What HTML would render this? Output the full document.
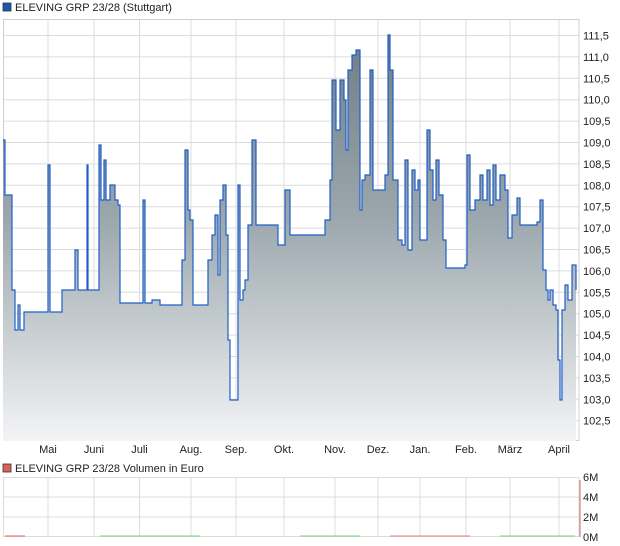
<!DOCTYPE html>
<html><head><meta charset="utf-8"><style>
html,body{margin:0;padding:0;background:#fff;width:620px;height:546px;overflow:hidden}
svg{display:block;font-family:"Liberation Sans",sans-serif}
</style></head><body>
<svg width="620" height="546" viewBox="0 0 620 546" xmlns="http://www.w3.org/2000/svg">
<defs>
<linearGradient id="g" x1="0" y1="0" x2="0" y2="1">
<stop offset="0" stop-color="#6f7d84"/>
<stop offset="0.45" stop-color="#9ba7ad"/>
<stop offset="1" stop-color="#f3f4f5"/>
</linearGradient>
</defs>
<rect x="3" y="3" width="8" height="8" fill="#1e56b4" stroke="#333" stroke-width="0.8"/>
<text x="15" y="11" font-size="11" fill="#222">ELEVING GRP 23/28 (Stuttgart)</text>

<g stroke="#dcdcdc" stroke-width="1">
<line x1="3" y1="19.5" x2="579" y2="19.5"/>
<line x1="3" y1="35.5" x2="579" y2="35.5"/><line x1="3" y1="56.9" x2="579" y2="56.9"/><line x1="3" y1="78.3" x2="579" y2="78.3"/><line x1="3" y1="99.7" x2="579" y2="99.7"/><line x1="3" y1="121.1" x2="579" y2="121.1"/><line x1="3" y1="142.5" x2="579" y2="142.5"/><line x1="3" y1="163.9" x2="579" y2="163.9"/><line x1="3" y1="185.3" x2="579" y2="185.3"/><line x1="3" y1="206.7" x2="579" y2="206.7"/><line x1="3" y1="228.1" x2="579" y2="228.1"/><line x1="3" y1="249.5" x2="579" y2="249.5"/><line x1="3" y1="270.9" x2="579" y2="270.9"/><line x1="3" y1="292.3" x2="579" y2="292.3"/><line x1="3" y1="313.7" x2="579" y2="313.7"/><line x1="3" y1="335.1" x2="579" y2="335.1"/><line x1="3" y1="356.5" x2="579" y2="356.5"/><line x1="3" y1="377.9" x2="579" y2="377.9"/><line x1="3" y1="399.3" x2="579" y2="399.3"/><line x1="3" y1="420.7" x2="579" y2="420.7"/>
<line x1="48" y1="19" x2="48" y2="441"/><line x1="94" y1="19" x2="94" y2="441"/><line x1="139.5" y1="19" x2="139.5" y2="441"/><line x1="191" y1="19" x2="191" y2="441"/><line x1="236" y1="19" x2="236" y2="441"/><line x1="284" y1="19" x2="284" y2="441"/><line x1="335" y1="19" x2="335" y2="441"/><line x1="378" y1="19" x2="378" y2="441"/><line x1="420" y1="19" x2="420" y2="441"/><line x1="466" y1="19" x2="466" y2="441"/><line x1="510" y1="19" x2="510" y2="441"/><line x1="559" y1="19" x2="559" y2="441"/>
</g>
<rect x="3.5" y="19.5" width="575.5" height="421" fill="none" stroke="#d0d0d0"/>

<polygon fill="url(#g)" points="3,441 3,140 5,140 5,195 10,195 12,195 12,290 15,290 15,330 18,330 18,305 20,305 20,330 24,330 24,312 45,312 48,312 48,165 50,165 50,312 58,312 62,312 62,290 70,290 75,290 75,250 78,250 78,290 85,290 87,290 87,165 88,165 88,290 96,290 99,290 99,145 101,145 101,200 104,200 104,160 106,160 106,200 110,200 110,185 115,185 115,200 118,200 118,205 120,205 120,303 140,303 143,303 143,200 145,200 145,303 150,303 152,303 152,300 160,300 160,305 180,305 182,305 182,260 185,260 185,150 188,150 188,210 190,210 190,220 193,220 193,305 205,305 208,305 208,260 212,260 212,235 215,235 215,215 218,215 218,275 220,275 220,200 223,200 223,185 226,185 226,235 228,235 228,340 230,340 230,400 235,400 238,400 238,185 240,185 240,300 243,300 243,290 245,290 245,280 248,280 248,225 252,225 252,140 256,140 256,225 275,225 278,225 278,245 285,245 285,190 290,190 290,235 320,235 325,235 325,220 330,220 330,180 332,180 332,80 336,80 336,130 340,130 340,80 344,80 344,100 346,100 346,150 348,150 348,70 352,70 352,55 356,55 356,50 360,50 360,210 362,210 362,180 365,180 365,175 370,175 370,70 373,70 373,190 380,190 385,190 385,175 388,175 388,35 390,35 390,70 393,70 393,180 395,180 398,180 398,240 402,240 402,245 405,245 405,160 408,160 408,250 412,250 412,170 415,170 415,190 418,190 418,180 420,180 420,240 425,240 427,240 427,130 430,130 430,170 433,170 433,200 436,200 436,160 439,160 439,195 443,195 443,240 446,240 446,268 455,268 465,268 465,265 467,265 467,155 470,155 470,210 475,210 475,200 480,200 480,175 483,175 483,200 487,200 487,170 490,170 490,205 493,205 493,165 496,165 496,200 500,200 500,175 505,175 505,190 508,190 508,238 512,238 512,215 517,215 517,198 520,198 520,225 530,225 537,225 537,222 540,222 540,200 543,200 543,270 546,270 546,290 548,290 548,300 550,300 550,290 553,290 553,305 556,305 556,310 558,310 558,360 560,360 560,400 562,400 562,310 565,310 565,285 568,285 568,300 572,300 572,265 575,265 576,265 576,290 576,441"/>
<polyline fill="none" stroke="#1e5fc8" stroke-width="1.2" points="3,140 5,140 5,195 10,195 12,195 12,290 15,290 15,330 18,330 18,305 20,305 20,330 24,330 24,312 45,312 48,312 48,165 50,165 50,312 58,312 62,312 62,290 70,290 75,290 75,250 78,250 78,290 85,290 87,290 87,165 88,165 88,290 96,290 99,290 99,145 101,145 101,200 104,200 104,160 106,160 106,200 110,200 110,185 115,185 115,200 118,200 118,205 120,205 120,303 140,303 143,303 143,200 145,200 145,303 150,303 152,303 152,300 160,300 160,305 180,305 182,305 182,260 185,260 185,150 188,150 188,210 190,210 190,220 193,220 193,305 205,305 208,305 208,260 212,260 212,235 215,235 215,215 218,215 218,275 220,275 220,200 223,200 223,185 226,185 226,235 228,235 228,340 230,340 230,400 235,400 238,400 238,185 240,185 240,300 243,300 243,290 245,290 245,280 248,280 248,225 252,225 252,140 256,140 256,225 275,225 278,225 278,245 285,245 285,190 290,190 290,235 320,235 325,235 325,220 330,220 330,180 332,180 332,80 336,80 336,130 340,130 340,80 344,80 344,100 346,100 346,150 348,150 348,70 352,70 352,55 356,55 356,50 360,50 360,210 362,210 362,180 365,180 365,175 370,175 370,70 373,70 373,190 380,190 385,190 385,175 388,175 388,35 390,35 390,70 393,70 393,180 395,180 398,180 398,240 402,240 402,245 405,245 405,160 408,160 408,250 412,250 412,170 415,170 415,190 418,190 418,180 420,180 420,240 425,240 427,240 427,130 430,130 430,170 433,170 433,200 436,200 436,160 439,160 439,195 443,195 443,240 446,240 446,268 455,268 465,268 465,265 467,265 467,155 470,155 470,210 475,210 475,200 480,200 480,175 483,175 483,200 487,200 487,170 490,170 490,205 493,205 493,165 496,165 496,200 500,200 500,175 505,175 505,190 508,190 508,238 512,238 512,215 517,215 517,198 520,198 520,225 530,225 537,225 537,222 540,222 540,200 543,200 543,270 546,270 546,290 548,290 548,300 550,300 550,290 553,290 553,305 556,305 556,310 558,310 558,360 560,360 560,400 562,400 562,310 565,310 565,285 568,285 568,300 572,300 572,265 575,265 576,265 576,290"/>

<g font-size="11" fill="#222">
<text x="583" y="39.5">111,5</text><text x="583" y="60.9">111,0</text><text x="583" y="82.3">110,5</text><text x="583" y="103.7">110,0</text><text x="583" y="125.1">109,5</text><text x="583" y="146.5">109,0</text><text x="583" y="167.9">108,5</text><text x="583" y="189.3">108,0</text><text x="583" y="210.7">107,5</text><text x="583" y="232.1">107,0</text><text x="583" y="253.5">106,5</text><text x="583" y="274.9">106,0</text><text x="583" y="296.3">105,5</text><text x="583" y="317.7">105,0</text><text x="583" y="339.1">104,5</text><text x="583" y="360.5">104,0</text><text x="583" y="381.9">103,5</text><text x="583" y="403.3">103,0</text><text x="583" y="424.7">102,5</text>
</g>
<g font-size="11" fill="#222" text-anchor="middle">
<text x="48" y="453">Mai</text><text x="94" y="453">Juni</text><text x="139.5" y="453">Juli</text><text x="191" y="453">Aug.</text><text x="236" y="453">Sep.</text><text x="284" y="453">Okt.</text><text x="335" y="453">Nov.</text><text x="378" y="453">Dez.</text><text x="420" y="453">Jan.</text><text x="466" y="453">Feb.</text><text x="510" y="453">März</text><text x="559" y="453">April</text>
</g>

<rect x="3" y="464" width="8" height="8" fill="#d9605c" stroke="#333" stroke-width="0.8"/>
<text x="15" y="472" font-size="11" fill="#222">ELEVING GRP 23/28 Volumen in Euro</text>
<g stroke="#dcdcdc" stroke-width="1">
<line x1="3" y1="477.5" x2="579" y2="477.5"/><line x1="3" y1="497" x2="579" y2="497"/><line x1="3" y1="517" x2="579" y2="517"/><line x1="3" y1="536.5" x2="579" y2="536.5"/>
<line x1="3.5" y1="477" x2="3.5" y2="537"/>
<line x1="48" y1="477" x2="48" y2="537"/><line x1="94" y1="477" x2="94" y2="537"/><line x1="139.5" y1="477" x2="139.5" y2="537"/><line x1="191" y1="477" x2="191" y2="537"/><line x1="236" y1="477" x2="236" y2="537"/><line x1="284" y1="477" x2="284" y2="537"/><line x1="335" y1="477" x2="335" y2="537"/><line x1="378" y1="477" x2="378" y2="537"/><line x1="420" y1="477" x2="420" y2="537"/><line x1="466" y1="477" x2="466" y2="537"/><line x1="510" y1="477" x2="510" y2="537"/><line x1="559" y1="477" x2="559" y2="537"/><line x1="579" y1="477" x2="579" y2="537"/>
</g>
<line x1="580" y1="480" x2="580" y2="537" stroke="#d9605c" stroke-width="1"/>
<g stroke-width="1">
<line x1="5" y1="536" x2="25" y2="536" stroke="#e06060"/><line x1="100" y1="536" x2="200" y2="536" stroke="#7fd07f"/><line x1="300" y1="536" x2="360" y2="536" stroke="#7fd07f"/><line x1="390" y1="536" x2="470" y2="536" stroke="#e08080"/><line x1="500" y1="536" x2="575" y2="536" stroke="#7fd07f"/>
</g>
<g font-size="11" fill="#222">
<text x="583" y="481">6M</text><text x="583" y="501">4M</text><text x="583" y="521">2M</text><text x="583" y="541">0M</text>
</g>
</svg>
</body></html>
